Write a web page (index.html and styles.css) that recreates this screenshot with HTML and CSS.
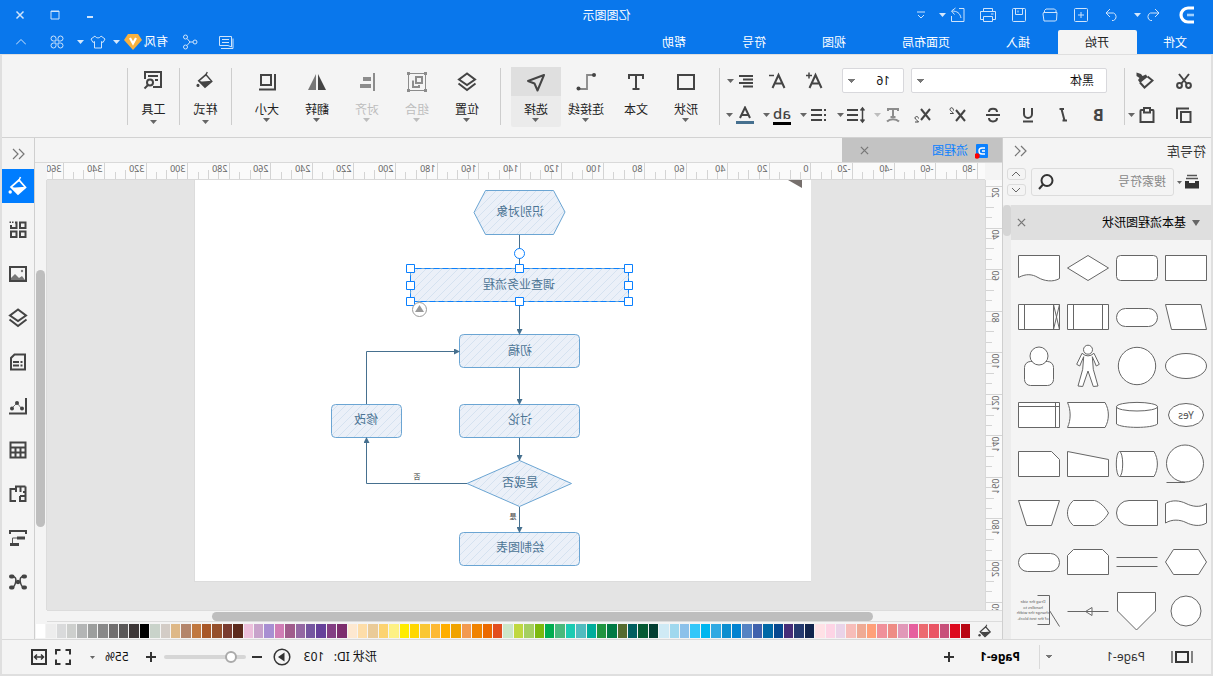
FILE: index.html
```html
<!DOCTYPE html>
<html lang="zh-CN">
<head>
<meta charset="utf-8">
<title>亿图图示</title>
<link rel="stylesheet" href="styles.css">
</head>
<body>
<svg class="defs" aria-hidden="true">
  <symbol id="caret" viewBox="0 0 7 4"><path d="M0 0H7L3.500 4Z" fill="currentColor"/></symbol>
  <symbol id="layers" viewBox="0 0 20 20"><path d="M10 1.500L18 7.500L10 13L2 7.500Z" fill="none" stroke="currentColor" stroke-width="2"/><path d="M1.500 11.500L10 18L18.500 11.500" fill="none" stroke="currentColor" stroke-width="2"/></symbol>
  <symbol id="bucket" viewBox="0 0 20 20"><path d="M7.500 1L9.500 5.500" stroke="currentColor" stroke-width="1.500" fill="none"/><path d="M9 4L17 11L10 18L2.500 11.500Z" fill="none" stroke="currentColor" stroke-width="1.700"/><path d="M3 11.500C7 10 13 13 17 10.500L10 18Z" fill="currentColor"/><circle cx="17.800" cy="16" r="1.700" fill="currentColor"/></symbol>
  <symbol id="more" viewBox="0 0 14 12"><path d="M6 1L1 6L6 11M12 1L7 6L12 11" fill="none" stroke="currentColor" stroke-width="1.200"/></symbol>
  <symbol id="cross" viewBox="0 0 10 10"><path d="M1 1L9 9M9 1L1 9" fill="none" stroke="currentColor" stroke-width="1.400"/></symbol>
</svg>
<div class="app">
  <header class="top">
    <div class="titlebar">
      <div class="quick">
        <svg class="logo" viewBox="0 0 16 18"><path d="M1 2H7A7 7 0 0 1 7 16H1" fill="none" stroke="#fff" stroke-width="3.200"/><path d="M1 9H8" stroke="#9fd0ff" stroke-width="2.600"/></svg>
        <button class="q q-split" aria-label="撤销"><svg class="i16" viewBox="0 0 16 16"><path d="M6 2L2 6L6 10M2 6H10.500A4 4 0 0 1 10.500 13.500H9"/></svg><svg class="caret"><use href="#caret"/></svg></button>
        <button class="q" aria-label="重做"><svg class="i16" viewBox="0 0 16 16"><path d="M10 2L14 6L10 10M14 6H6.500A4 4 0 0 0 6.500 13.500H8"/></svg></button>
        <button class="q" aria-label="新建"><svg class="i16" viewBox="0 0 16 16"><rect x="1.500" y="1.500" width="13" height="13" rx="1"/><path d="M8 5V11M5 8H11"/></svg></button>
        <button class="q" aria-label="打开"><svg class="i16" viewBox="0 0 16 16"><path d="M2 5.500V3.500L3.500 2H12L13.500 3.500V5.500M1 5.500H14.500L15 7L14 14H2.500L1.500 13Z"/></svg></button>
        <button class="q" aria-label="保存"><svg class="i16" viewBox="0 0 16 16"><rect x="1.500" y="1.500" width="13" height="13" rx="1"/><path d="M4.500 2V7.500H11.500V2M9 3.500V5.500"/></svg></button>
        <button class="q" aria-label="打印"><svg class="i16" viewBox="0 0 16 16"><path d="M3.500 4.500V1.500H12.500V4.500M3.500 12.500H0.500V4.500H15.500V12.500H12.500M3.500 9.500H12.500V14.500H3.500ZM2.500 7H5"/></svg></button>
        <button class="q q-split" aria-label="导出"><svg class="i16" viewBox="0 0 16 16"><path d="M7 1.500H2V14.500H14.500V9M5 11C6 6 9 4 14 4M10.500 1L14.500 4L11.500 7.500"/></svg><svg class="caret"><use href="#caret"/></svg></button>
        <button class="q q-more" aria-label="自定义"><svg class="i8" viewBox="0 0 8 8"><path d="M0 1H8M1 4L4 7L7 4"/></svg></button>
      </div>
      <h1 class="title">亿图图示</h1>
      <div class="window">
        <button class="w" aria-label="最小化"><svg class="i10" viewBox="0 0 10 10"><path d="M2 7H8" stroke-width="2"/></svg></button>
        <button class="w" aria-label="最大化"><svg class="i10" viewBox="0 0 10 10"><path d="M1 1H9V9H1ZM1 1.500H9"/></svg></button>
        <button class="w" aria-label="关闭"><svg class="i10" viewBox="0 0 10 10"><path d="M1.500 1.500L8.500 8.500M8.500 1.500L1.500 8.500" stroke-width="1.500"/></svg></button>
      </div>
    </div>
    <div class="menubar">
      <nav class="menu">
        <button class="m m-file">文件</button>
        <button class="m m-on">开始</button>
        <button class="m">插入</button>
        <button class="m">页面布局</button>
        <button class="m">视图</button>
        <button class="m">符号</button>
        <button class="m">帮助</button>
      </nav>
      <div class="account">
        <button class="a" aria-label="消息"><svg class="i16" viewBox="0 0 16 16"><path d="M2.500 2.500H14.500V11.500H6L2.500 13ZM5 5.500H12M5 8.500H12" /><path d="M1 4.500V14.500H13"/></svg></button>
        <button class="a" aria-label="分享"><svg class="i16" viewBox="0 0 16 16"><circle cx="3" cy="8" r="2"/><circle cx="12.500" cy="3" r="2"/><circle cx="12.500" cy="13" r="2"/><path d="M5 8H8L11 4.500M8 8L11 11.500"/></svg></button>
        <button class="user">有风<svg class="gem" viewBox="0 0 18 16"><path d="M4 0H14L18 6L9 16L0 6Z" fill="#f8b13e"/><path d="M6 4L9 9.500L12 4" fill="none" stroke="#fff" stroke-width="2.200"/></svg><svg class="caret"><use href="#caret"/></svg></button>
        <button class="skin" aria-label="皮肤"><svg class="i16" viewBox="0 0 16 16"><path d="M5 2L1 5L3 8.500L4.500 7.500V14H11.500V7.500L13 8.500L15 5L11 2C10 4.500 6 4.500 5 2Z"/></svg><svg class="caret"><use href="#caret"/></svg></button>
        <button class="a" aria-label="应用"><svg class="i16" viewBox="0 0 16 16"><path d="M7 7H4.500A2.500 2.500 0 1 1 7 4.500ZM9 7V4.500A2.500 2.500 0 1 1 11.500 7ZM7 9V11.500A2.500 2.500 0 1 1 4.500 9ZM9 9H11.500A2.500 2.500 0 1 1 9 11.500Z"/></svg></button>
        <button class="a" aria-label="收起"><svg class="i10" viewBox="0 0 10 10"><path d="M0 7.500L5 2.500L10 7.500"/></svg></button>
      </div>
    </div>
  </header>

  <div class="body">
    <section class="ribbon" aria-label="开始">
      <div class="tools clip">
        <div class="line">
          <button class="t" aria-label="剪切"><svg class="i18" viewBox="0 0 18 18"><path d="M4 2L12 12M14 2L6 12" class="st"/><circle cx="4.500" cy="13.500" r="2.400" class="st"/><circle cx="13.500" cy="13.500" r="2.400" class="st"/></svg></button>
          <button class="t" aria-label="格式刷"><svg class="i18" viewBox="0 0 18 18"><path d="M17.500 0.500L13 2L11.500 4L8 2.500L6.500 5L14 11L16 8L14.500 6L17.500 4Z" class="fl"/><path d="M6.500 4.500L1.500 8.500L9.500 15.500L14 10.500" class="st"/></svg></button>
        </div>
        <div class="line">
          <button class="t" aria-label="复制"><svg class="i18" viewBox="0 0 18 18"><path d="M2.500 6H12V16H2.500ZM4 2.500H16V13" class="st"/></svg></button>
          <button class="split narrow" aria-label="粘贴"><svg class="i18" viewBox="0 0 18 18"><path d="M6 4H3Q2.500 4 2.500 5V16H15.500V5Q15.500 4 15 4H12" class="st"/><path d="M6 2H12V6.500H6Z" class="st"/></svg><svg class="caret"><use href="#caret"/></svg></button>
        </div>
      </div>
      <i class="sep"></i>
      <div class="tools font">
        <div class="line fields">
          <select class="field family" aria-label="字体"><option>黑体</option></select>
          <select class="field size" aria-label="字号"><option>16</option></select>
          <div class="line tight">
            <button class="t wide" aria-label="增大字号"><svg class="i18" viewBox="0 0 18 18"><path d="M1.500 16L7.500 3L13.500 16M4 11.500H11" class="st"/><path d="M11 3.500H17M14 0.500V6.500" class="st thin"/></svg></button>
            <button class="t wide" aria-label="减小字号"><svg class="i18" viewBox="0 0 18 18"><path d="M1.500 16L7.500 3L13.500 16M4 11.500H11" class="st"/><path d="M12 3.500H17" class="st thin"/></svg></button>
            <button class="split" aria-label="对齐方式"><svg class="i18" viewBox="0 0 18 18"><path d="M2 4H16M2 7.500H12M2 11H16M2 14.500H12" class="st"/></svg><svg class="caret"><use href="#caret"/></svg></button>
          </div>
        </div>
        <div class="line tight">
          <button class="t glyph bold">B</button>
          <button class="t glyph" aria-label="斜体"><svg class="i18" viewBox="0 0 18 18"><path d="M8 3H12.500M10.500 3L7.500 14.500M5 14.500H9.500" class="st"/></svg></button>
          <button class="t glyph" aria-label="下划线"><svg class="i18" viewBox="0 0 18 18"><path d="M5 2V8A4 4 0 0 0 13 8V2M4 15.500H14" class="st"/></svg></button>
          <button class="t glyph" aria-label="删除线"><svg class="i18" viewBox="0 0 18 18"><path d="M13 6C13 1.500 5 1.500 5 6M5 12C5 16.500 13 16.500 13 12M2 9H16" class="st"/></svg></button>
          <button class="t glyph" aria-label="上标"><svg class="i18" viewBox="0 0 18 18"><path d="M2 4L11 15M11 4L2 15" class="st"/><path d="M13.500 4.500C13.500 1 17 1 17 3.500C17 5 14 6 13.500 7.500H17" class="st fine"/></svg></button>
          <button class="t glyph" aria-label="下标"><svg class="i18" viewBox="0 0 18 18"><path d="M2 3L11 14M11 3L2 14" class="st"/><path d="M13.500 12.500C13.500 10 17 10 17 12C17 13.500 14 14.500 13.500 16H17" class="st fine"/></svg></button>
          <button class="split off" aria-label="文字效果"><svg class="i18" viewBox="0 0 18 18"><path d="M4 5V3H14V5M9 3V11M6.500 11H11.500M3 15.500C6 12.500 12 12.500 15 15.500" class="st"/></svg><svg class="caret"><use href="#caret"/></svg></button>
          <button class="split" aria-label="行距"><svg class="i18" viewBox="0 0 18 18"><path d="M2.500 2V16M0.500 4.500L2.500 2L4.500 4.500M0.500 13.500L2.500 16L4.500 13.500" class="st thin"/><path d="M7 4H18M7 9H18M7 14H18" class="st"/></svg><svg class="caret"><use href="#caret"/></svg></button>
          <button class="split" aria-label="项目符号"><svg class="i18" viewBox="0 0 18 18"><path d="M2 4H4M2 9H4M2 14H4M6 4H17M6 9H17M6 14H17" class="st"/></svg><svg class="caret"><use href="#caret"/></svg></button>
          <button class="split"><span class="ab">ab</span><svg class="caret"><use href="#caret"/></svg></button>
          <button class="split" aria-label="字体颜色"><svg class="i18" viewBox="0 0 18 18"><path d="M4 12L9 1.500L14 12M5.500 9H12.500" class="st"/><path d="M0 16.500H18" stroke="#46708f" stroke-width="3"/></svg><svg class="caret"><use href="#caret"/></svg></button>
        </div>
      </div>
      <i class="sep"></i>
      <div class="bigs">
        <button class="big"><span class="pic"><svg class="i20" viewBox="0 0 20 20"><rect x="2" y="3" width="16" height="14" class="st"/></svg></span><span class="lb">形状</span><svg class="caret"><use href="#caret"/></svg></button>
        <button class="big"><span class="pic"><svg class="i20" viewBox="0 0 20 20"><path d="M3 7V3H17V7M10 3V17M6.500 17H13.500" class="st"/></svg></span><span class="lb">文本</span></button>
        <button class="big"><span class="pic"><svg class="i20" viewBox="0 0 20 20"><path d="M2 3H9V17H16" fill="none" stroke="#888" stroke-width="1.800"/><circle cx="2" cy="3" r="2" class="fl"/><circle cx="17.500" cy="16.500" r="2" class="fl"/></svg></span><span class="lb">连接线</span><svg class="caret"><use href="#caret"/></svg></button>
        <button class="big big-on"><span class="pic"><svg class="i20" viewBox="0 0 20 20"><path d="M2 3L18 9L11.500 11.500L8.500 18.500Z" class="st" stroke-linejoin="round"/></svg></span><span class="lb">选择</span><svg class="caret"><use href="#caret"/></svg></button>
      </div>
      <i class="sep"></i>
      <div class="bigs">
        <button class="big"><span class="pic"><svg class="i20"><use href="#layers"/></svg></span><span class="lb">位置</span><svg class="caret"><use href="#caret"/></svg></button>
        <button class="big off"><span class="pic"><svg class="i20" viewBox="0 0 20 20"><path d="M1.500 1.500H18.500V18.500H1.500Z" class="st fine"/><path d="M5 5H11V11H5ZM14 8.500V15H8V13" class="st"/><path d="M0 0H3V3H0ZM17 0H20V3H17ZM0 17H3V20H0ZM17 17H20V20H17Z" class="fl"/></svg></span><span class="lb">组合</span><svg class="caret"><use href="#caret"/></svg></button>
        <button class="big off"><span class="pic"><svg class="i20" viewBox="0 0 20 20"><path d="M3 1V19" class="st"/><path d="M6 5H14V9H6ZM6 12H17V16H6Z" class="fl"/></svg></span><span class="lb">对齐</span><svg class="caret"><use href="#caret"/></svg></button>
        <button class="big"><span class="pic"><svg class="i20" viewBox="0 0 20 20"><path d="M9 2V18H1Z" class="fl"/><path d="M11 2V18H19Z" fill="#777"/></svg></span><span class="lb">翻转</span><svg class="caret"><use href="#caret"/></svg></button>
        <button class="big"><span class="pic"><svg class="i20" viewBox="0 0 20 20"><path d="M6 3H16V13H6ZM2 2V17.500H18" class="st"/></svg></span><span class="lb">大小</span><svg class="caret"><use href="#caret"/></svg></button>
      </div>
      <i class="sep"></i>
      <button class="big big-tall"><span class="pic"><svg class="i18"><use href="#bucket"/></svg></span><span class="lb">样式</span><svg class="caret"><use href="#caret"/></svg></button>
      <i class="sep"></i>
      <button class="big big-tall"><span class="pic"><svg class="i20" viewBox="0 0 20 20"><path d="M10 17H2V2H18V9M5 6H15M5 10H8" class="st"/><circle cx="13" cy="12.500" r="3" class="st"/><path d="M15 15L18.500 18.500" class="st"/></svg></span><span class="lb">工具</span><svg class="caret"><use href="#caret"/></svg></button>
      <i class="sep"></i>
    </section>

    <main class="work">
      <aside class="library">
        <div class="lib-head"><h2 class="lib-title">符号库</h2><button class="plain" aria-label="收起符号库"><svg class="more"><use href="#more"/></svg></button></div>
        <div class="lib-search">
          <button class="box" aria-label="符号库菜单"><svg class="i16" viewBox="0 0 16 16"><path d="M3 1.500H13M2 4.500H14" stroke="#555" stroke-width="1.500"/><path d="M1 7H5V9H11V7H15V14.500H1Z" class="fl"/></svg><svg class="caret sm"><use href="#caret"/></svg></button>
          <div class="find"><input class="find-in" type="text" placeholder="搜索符号" aria-label="搜索符号"><svg class="lens" viewBox="0 0 18 18"><circle cx="10" cy="7.500" r="5.500" class="st"/><path d="M6 11.500L2 16" class="st" stroke-width="3"/></svg></div>
          <div class="steps">
            <button class="step" aria-label="上一个"><svg class="chev" viewBox="0 0 10 6"><path d="M1 5L5 1L9 5"/></svg></button>
            <button class="step" aria-label="下一个"><svg class="chev" viewBox="0 0 10 6"><path d="M1 1L5 5L9 1"/></svg></button>
          </div>
        </div>
        <div class="lib-body">
          <div class="lib-col">
            <div class="cat"><svg class="tri" viewBox="0 0 8 6"><path d="M0 0H8L4 6Z" fill="#666"/></svg><h3 class="cat-name">基本流程图形状</h3><button class="plain" aria-label="关闭"><svg class="x"><use href="#cross"/></svg></button></div>
            <div class="shapes">
              <svg class="s" viewBox="0 0 49 49"><path d="M4.500 11.500H45.500V36.500H4.500Z"/></svg>
              <svg class="s" viewBox="0 0 49 49"><rect x="4.500" y="11.500" width="41" height="25" rx="4"/></svg>
              <svg class="s" viewBox="0 0 49 49"><path d="M25 11.500L45.500 24L25 36.500L4.500 24Z"/></svg>
              <svg class="s" viewBox="0 0 49 49"><path d="M4.500 11.500H45.500V33.500C38 29.500 32 30 26 33.500S11 38.500 4.500 34.500Z"/></svg>
              <svg class="s" viewBox="0 0 49 49"><path d="M10 11.500H45.500L39.500 36.500H4.500Z"/></svg>
              <svg class="s" viewBox="0 0 49 49"><rect x="4.500" y="15.500" width="41" height="18" rx="9"/></svg>
              <svg class="s" viewBox="0 0 49 49"><path d="M4.500 11.500H45.500V36.500H4.500ZM10.500 11.500V36.500M39.500 11.500V36.500"/></svg>
              <svg class="s" viewBox="0 0 49 49"><path d="M4.500 11.500H45.500V36.500H4.500ZM10.500 11.500V36.500L4.500 11.500M10.500 11.500L4.500 36.500M39.500 11.500V36.500"/></svg>
              <svg class="s" viewBox="0 0 49 49"><ellipse cx="25" cy="24" rx="20.500" ry="12.500"/></svg>
              <svg class="s" viewBox="0 0 49 49"><circle cx="25" cy="24" r="18.700"/></svg>
              <svg class="s" viewBox="0 0 49 49"><circle cx="25" cy="7.700" r="4.500"/><path d="M19 11.300L13.700 22.300L16.700 24L20.700 14.700L19.700 27.300L15 44L19.700 44.500L25 29L30.300 44.500L35 44L30.300 27.300L29.300 14.700L33.300 24L36.300 22.300L31 11.300Q25 16.500 19 11.300Z"/></svg>
              <svg class="s" viewBox="0 0 49 49"><rect x="10.500" y="19.500" width="29" height="24" rx="6"/><circle cx="25" cy="14" r="9"/></svg>
              <svg class="s" viewBox="0 0 49 49"><ellipse cx="25" cy="24" rx="17.500" ry="11.500"/><text x="25" y="28" class="s-yes">Yes</text></svg>
              <svg class="s" viewBox="0 0 49 49"><path d="M4.500 15.500V33C10 37.500 40 37.500 45.500 33V15.500"/><ellipse cx="25" cy="15.700" rx="20.500" ry="4.300"/></svg>
              <svg class="s" viewBox="0 0 49 49"><path d="M45.500 11.500H8C3.500 19 3.500 29 8 36.500H45.500C42 29 42 19 45.500 11.500Z"/></svg>
              <svg class="s" viewBox="0 0 49 49"><path d="M4.500 11.500H45.500V36.500H4.500ZM8.500 11.500V36.500M4.500 15.500H45.500"/></svg>
              <svg class="s" viewBox="0 0 49 49"><circle cx="26" cy="23.500" r="18.500"/><path d="M26 42.500H44.500"/></svg>
              <svg class="s" viewBox="0 0 49 49"><path d="M42.500 11.500H8C3.500 19 3.500 29 8 36.500H42.500"/><ellipse cx="42.500" cy="24" rx="3.200" ry="12.500"/></svg>
              <svg class="s" viewBox="0 0 49 49"><path d="M45.500 11.500L4.500 19.500V36.500H45.500Z"/></svg>
              <svg class="s" viewBox="0 0 49 49"><path d="M12.500 11.500H45.500V36.500H4.500V19.500Z"/></svg>
              <svg class="s" viewBox="0 0 49 49"><path d="M4.500 14.500C11 19 19 17.500 25 14.500S39 10.500 45.500 14.500V34C39 30 31 30.500 25 33.500S11 38 4.500 34Z"/></svg>
              <svg class="s" viewBox="0 0 49 49"><path d="M4.500 11.500H33A12.500 12.500 0 0 1 33 36.500H4.500Z"/></svg>
              <svg class="s" viewBox="0 0 49 49"><path d="M39.500 11.500C47.500 18 47.500 30 39.500 36.500H18.500C13 35 8 30 4.500 24C8 18 13 13 18.500 11.500Z"/></svg>
              <svg class="s" viewBox="0 0 49 49"><path d="M4.500 11.500H45.500L37.500 36.500H12.500Z"/></svg>
              <svg class="s" viewBox="0 0 49 49"><path d="M4.500 24L12.500 11.500H37.500L45.500 24L37.500 36.500H12.500Z"/></svg>
              <svg class="s" viewBox="0 0 49 49"><path d="M4.500 19.500H45.500M4.500 28.500H45.500"/></svg>
              <svg class="s" viewBox="0 0 49 49"><path d="M4.500 36.500V17.500L10.500 11.500H39.500L45.500 17.500V36.500Z"/></svg>
              <svg class="s" viewBox="0 0 49 49"><rect x="4.500" y="15.500" width="41" height="18" rx="9"/></svg>
              <svg class="s" viewBox="0 0 49 49"><circle cx="25" cy="24" r="15"/></svg>
              <svg class="s" viewBox="0 0 49 49"><path d="M6.500 5.500H44.500V24L25.500 43L6.500 24Z"/></svg>
              <svg class="s" viewBox="0 0 49 49"><path d="M4.500 24.500H45.500M21 20.500L27.500 24.500L21 28.500Z"/></svg>
              <svg class="s" viewBox="0 0 49 49"><path d="M26.500 8.500H14.500V37.500H26.500M14.500 23.500L4.500 39.500" fill="none"/><g class="s-note"><text x="31" y="16">Drag the side</text><text x="31" y="22">handles to</text><text x="31" y="27">change the width</text><text x="31" y="33">of the text block.</text></g></svg>
            </div>
          </div>
          <div class="track"><div class="grip"></div></div>
        </div>
      </aside>

      <section class="editor">
        <div class="docs">
          <div class="doc"><svg class="doc-ic" viewBox="0 0 14 16"><rect x="1" y="1" width="12" height="14" rx="1" fill="#0a80ff"/><path d="M4 5H7A3 3 0 0 1 7 11H4M4 8H7" fill="none" stroke="#fff" stroke-width="1.400"/><circle cx="12" cy="13" r="2.700" fill="#f00"/></svg><span class="doc-name">流程图</span><button class="plain" aria-label="关闭文档"><svg class="x"><use href="#cross"/></svg></button></div>
        </div>
        <div class="desk">
          <div class="corner"></div>
          <svg class="rule-h" id="ruleH" aria-hidden="true"></svg>
          <div class="corner"></div>
          <svg class="rule-v" id="ruleV" aria-hidden="true"></svg>
          <div class="canvas">
            <svg class="page" viewBox="0 0 616 401">
              <defs>
                <pattern id="hatch" width="8" height="8" patternUnits="userSpaceOnUse"><path fill="#ebf0f8" d="M0 0H8V8H0Z"/><path d="M-1 -1L9 9M-1 7L1 9M7 -1L9 1" stroke="#cfdeed" stroke-width="0.800"/></pattern>
                <marker id="head" viewBox="0 0 6 6" refX="5" refY="3" markerWidth="6" markerHeight="6" markerUnits="userSpaceOnUse" orient="auto"><path d="M0 0L6 3L0 6Z" fill="#46708f"/></marker>
              </defs>
              <path d="M9 0H23L9 8Z" fill="#766f6c"/>
              <g class="node">
                <path d="M246 32L257.500 10.500H325.500L337 32.500L325.500 54.500H257.500Z"/>
                <path d="M182.500 88.500H400.500V121.500H182.500Z"/>
                <rect x="231.500" y="154.500" width="120" height="33" rx="4"/>
                <rect x="231.500" y="224.500" width="120" height="33" rx="4"/>
                <path d="M239.500 303.500L291.500 280.500L344 303.500L291.500 326.500Z"/>
                <rect x="231.500" y="352.500" width="120" height="33" rx="4"/>
                <rect x="409.500" y="224.500" width="70" height="33" rx="4"/>
              </g>
              <g class="wire">
                <path d="M291.500 55V88"/>
                <path d="M291.500 122V154" marker-end="url(#head)"/>
                <path d="M291.500 188V224" marker-end="url(#head)"/>
                <path d="M291.500 258V280" marker-end="url(#head)"/>
                <path d="M291.500 327V352" marker-end="url(#head)"/>
                <path d="M344 303.500H444.500V258" marker-end="url(#head)"/>
                <path d="M444.500 224V171.500H352" marker-end="url(#head)"/>
              </g>
              <g class="txt">
                <text x="291" y="36">识别对象</text>
                <text x="292" y="109">调查业务流程</text>
                <text x="291" y="175">初稿</text>
                <text x="291" y="244">讨论</text>
                <text x="291" y="307">是或否</text>
                <text x="291" y="372">绘制图表</text>
                <text x="445" y="244">修改</text>
              </g>
              <g class="tag"><text x="394" y="299">否</text><text x="298" y="339">是</text></g>
              <path class="pick" d="M182.500 88.500H400.500V121.500H182.500Z"/>
              <g class="knob">
                <circle cx="291.500" cy="73.500" r="5"/>
                <path d="M178.500 84.500h8v8h-8ZM287.500 84.500h8v8h-8ZM396.500 84.500h8v8h-8ZM178.500 101.500h8v8h-8ZM396.500 101.500h8v8h-8ZM178.500 117.500h8v8h-8ZM287.500 117.500h8v8h-8ZM396.500 117.500h8v8h-8Z"/>
              </g>
              <circle cx="391.500" cy="129.500" r="7" fill="#fff" stroke="#999"/><path d="M391.500 125L396 132H387Z" fill="#999"/>
            </svg>
          </div>
          <div class="vbar"><div class="vthumb"></div></div>
        </div>
        <div class="hbar"><div class="hthumb"></div></div>
        <div class="palette"><svg class="fillic"><use href="#bucket"/></svg><div class="colors" id="colors"></div></div>
      </section>

      <nav class="rail" aria-label="面板">
        <button class="r r-top" aria-label="收起面板"><svg class="more"><use href="#more"/></svg></button>
        <button class="r r-on" aria-label="样式"><svg class="i20"><use href="#bucket"/></svg></button>
        <button class="r" aria-label="符号"><svg class="i18" viewBox="0 0 18 18"><path d="M1.500 1.500H7V7H1.500ZM1.500 10.500H7V16H1.500ZM10.500 10.500H16V16H10.500ZM12 1.500H10.500V7H16V4" class="st"/><path d="M13.500 0.500H15V2H13.500ZM16 0.500H17.500V2H16Z" class="fl"/></svg></button>
        <button class="r" aria-label="图片"><svg class="i18" viewBox="0 0 18 18"><path d="M1 2H17V16H1Z" class="st"/><path d="M2 15L5 11L8 13L12 9L16 13V15Z" fill="#777"/><circle cx="5" cy="6" r="1.200" fill="#777"/></svg></button>
        <button class="r" aria-label="图层"><svg class="i20"><use href="#layers"/></svg></button>
        <button class="r" aria-label="备注"><svg class="i18" viewBox="0 0 18 18"><path d="M2 1.500H12.500L16 5V16.500H2Z" class="st"/><path d="M4.500 9H6.500M8 9H14M4.500 12.500H6.500M8 12.500H14" class="st"/></svg></button>
        <button class="r" aria-label="图表"><svg class="i18" viewBox="0 0 18 18"><path d="M1 1V16.500H18" class="st"/><path d="M5 12L10 6L15 11" stroke="#777" fill="none"/><circle cx="5" cy="11.500" r="2" class="fl"/><circle cx="10" cy="6" r="2" class="fl"/><circle cx="15" cy="11.500" r="2" class="fl"/></svg></button>
        <button class="r" aria-label="表格"><svg class="i18" viewBox="0 0 18 18"><path d="M1.500 1.500H16.500V16.500H1.500ZM1.500 6.500H16.500M1.500 11.500H16.500M6.500 6.500V16.500M11.500 6.500V16.500" class="st"/></svg></button>
        <button class="r" aria-label="平面图"><svg class="i18" viewBox="0 0 18 18"><path d="M1.500 1.500H11V4H16.500V16H11M8 16H1.500V1.500M1.500 7H4M6.500 2V7M11 4V7M1.500 11H7M7 11V16" class="st"/></svg></button>
        <button class="r" aria-label="甘特图"><svg class="i18" viewBox="0 0 18 18"><path d="M0 2H18M1 2V5M17 2V5" class="st"/><path d="M2 7.500H10V10.500H2ZM8 14H17V17H8Z" class="fl"/><path d="M10 9H14.500V14" stroke="#555" fill="none"/></svg></button>
        <button class="r" aria-label="思维导图"><svg class="i18" viewBox="0 0 18 18"><path d="M3 3.500C10 3 6 14 3 14.500M15 3.500C8 3 12 14 15 14.500M7 9H11" class="st thin"/><rect x="0" y="1.500" width="5.500" height="4" rx="2" class="fl"/><rect x="0" y="12.500" width="5.500" height="4" rx="2" class="fl"/><rect x="12.500" y="1.500" width="5.500" height="4" rx="2" class="fl"/><rect x="12.500" y="12.500" width="5.500" height="4" rx="2" class="fl"/><circle cx="9" cy="9" r="2.200" class="fl"/></svg></button>
      </nav>
    </main>

    <footer class="status">
      <button class="view" aria-label="演示视图"><svg class="viewic" viewBox="0 0 22 12"><path d="M1 0V12M21 0V12" stroke="#777" stroke-width="1.800"/><path d="M5 1H17V11H5Z" class="st"/></svg></button>
      <select class="pages" aria-label="页面"><option>Page-1</option></select>
      <button class="page-tab">Page-1</button>
      <button class="mini" aria-label="添加页面"><svg class="i10" viewBox="0 0 10 10"><path d="M5 0V10M0 5H10" class="st"/></svg></button>
      <div class="zoom">
        <span class="ident">形状 ID:&nbsp;&nbsp; 103</span>
        <button class="play" aria-label="播放"><svg class="i18" viewBox="0 0 18 18"><circle cx="9" cy="9" r="7.800" class="st thin"/><path d="M6.500 4.500L13 9L6.500 13.500Z" class="fl"/></svg></button>
        <button class="minus" aria-label="缩小"><svg class="i10" viewBox="0 0 10 10"><path d="M0 5H10" class="st"/></svg></button>
        <input class="slide" type="range" min="0" max="100" value="12" aria-label="缩放">
        <button class="plus" aria-label="放大"><svg class="i10" viewBox="0 0 10 10"><path d="M5 0V10M0 5H10" class="st"/></svg></button>
        <button class="pct">55%<svg class="caret sm"><use href="#caret"/></svg></button>
        <button class="fit" aria-label="全屏"><svg class="i16" viewBox="0 0 16 16"><path d="M1 5.500V1H5.500M10.500 1H15V5.500M15 10.500V15H10.500M5.500 15H1V10.500" class="st"/></svg></button>
        <button class="fit" aria-label="适应宽度"><svg class="i16" viewBox="0 0 16 16"><path d="M1 1H15V15H1Z" class="st"/><path d="M4 8H12M6 5.500L3.500 8L6 10.500M10 5.500L12.500 8L10 10.500" class="st thin"/></svg></button>
      </div>
    </footer>
  </div>
</div>
<script src="app.js"></script>
</body>
</html>
```
FILE: styles.css
```css
* { box-sizing: border-box; }
html, body { margin: 0; min-height: 100%; }
body {
  font: 12px/16px "Noto Sans", "Noto Sans CJK SC", sans-serif;
  color: #222;
  background: #f4f4f4;
}
button, input, select { font: inherit; color: inherit; margin: 0; padding: 0; border: 0; background: none; border-radius: 0; }
button { display: flex; align-items: center; justify-content: center; }
h1, h2, h3 { margin: 0; font-size: 12px; font-weight: 400; }
svg { display: block; flex: none; }
.defs { position: absolute; width: 0; height: 0; }

/* the whole window is shown mirrored */
.app { min-height: 100vh; display: flex; flex-direction: column; transform: scaleX(-1); }

.st { fill: none; stroke: currentColor; stroke-width: 2; }
.st.thin { stroke-width: 1.500; }
.st.fine { stroke-width: 1; }
.fl { fill: currentColor; }
.i8 { width: 8px; height: 8px; }
.i10 { width: 10px; height: 10px; }
.i16 { width: 16px; height: 16px; }
.i18 { width: 18px; height: 18px; }
.i20 { width: 20px; height: 20px; }
.caret { width: 7px; height: 4px; color: #666; }
.caret.sm { width: 5px; height: 3px; }
.x { width: 9px; height: 9px; color: #777; }
.more { width: 14px; height: 12px; color: #777; }

/* title and menu */
.top { background: #0977ec; color: #fff; }
.top .caret { color: #d5e8fc; }
.titlebar { display: grid; grid-template-columns: 1fr auto 1fr; height: 30px; align-items: center; }
.title { padding-top: 1px; }
.quick { display: flex; align-items: center; padding-left: 18px; }
.logo { width: 16px; height: 20px; margin-right: 11px; }
.q, .w, .a, .skin { height: 28px; fill: none; stroke: #cfe4fb; }
.q .caret, .skin .caret { stroke: none; }
.q { width: 31px; }
.q-split { width: 40px; justify-content: flex-start; padding-left: 7px; gap: 4px; }
.q-more { width: 24px; }
.window { display: flex; justify-content: flex-end; padding-right: 3px; }
.w { width: 35px; }
.menubar { display: flex; justify-content: space-between; height: 24px; }
.menu { display: flex; }
.m { padding: 2px 28px 0; }
.m-file { padding: 2px 26px 0; }
.m-on { background: #f4f4f4; color: #222; border-radius: 2px 2px 0 0; padding: 2px 27px 0 28px; }
.account { display: flex; align-items: center; padding-right: 3px; }
.a { width: 36px; height: 24px; }
.user { width: 62px; height: 24px; padding-left: 4px; justify-content: flex-start; }
.gem { width: 18px; height: 16px; margin: 0 4px 0 2px; }
.skin { width: 35px; height: 24px; justify-content: flex-start; padding-left: 4px; gap: 6px; }

.body { flex: 1; display: flex; flex-direction: column; border: solid #dfdfdf; border-width: 1px 2px 2px; background: #f4f4f4; }

/* ribbon */
.ribbon { display: flex; height: 83px; padding-top: 12px; border-bottom: 1px solid #d2d2d2; color: #444; }
.sep { width: 1px; height: 57px; margin-top: 1px; background: #cdcdcd; }
.tools { display: flex; flex-direction: column; gap: 9px; padding-top: 1px; }
.line { display: flex; height: 25px; gap: 9px; }
.line.tight { gap: 0; }
.clip { width: 86px; padding-left: 12px; }
.t { width: 30px; }
.t.wide { width: 37px; }
.t.glyph { width: 35px; }
.bold { font-size: 16px; font-weight: 700; }
.split { width: 37px; justify-content: flex-start; padding-left: 4px; gap: 3px; }
.split.narrow { width: 34px; }
.off { color: #8c8c8c; }
.off .caret, .off .lb { color: #bdbdbd; }
.ab { width: 18px; height: 20px; line-height: 16px; font-size: 15px; font-weight: 500; border-bottom: 3px solid #000; display: flex; justify-content: center; }
.font { padding-left: 8px; padding-right: 1px; }
.fields { padding-left: 9px; gap: 7px; }
.fields .tight { margin-left: 2px; }
.field { height: 25px; border: 1px solid #d8d8dc; border-radius: 2px; background: #fff; color: #111; }
.family { width: 196px; padding-left: 12px; }
.size { width: 62px; padding-left: 13px; }
.field, .pages {
  appearance: none;
  background-image: linear-gradient(to bottom left, #777 50%, transparent 50%), linear-gradient(to bottom right, #777 50%, transparent 50%);
  background-size: 4px 4px;
  background-repeat: no-repeat;
  background-position: right 9px center, right 5px center;
}
.bigs { display: flex; padding: 0 10px 0 8px; }
.big { width: 50px; height: 60px; flex-direction: column; justify-content: flex-start; border-radius: 2px; }
.pic { display: flex; align-items: center; justify-content: center; height: 29px; width: 100%; margin-bottom: 6px; }
.lb { color: #222; }
.big-on { background: #ebebeb; }
.big-on .pic { background: #dfdfdf; }
.big-tall { width: 51px; }
.big-tall .pic { height: 25px; margin-bottom: 10px; }
.big-tall .lb { margin-bottom: 2px; }

/* symbol library */
.work { flex: 1; display: grid; grid-template-columns: 209px 1fr 33px; }
.library { display: flex; flex-direction: column; border-right: 1px solid #cfcfcf; }
.lib-head { display: flex; justify-content: space-between; align-items: center; height: 26px; padding: 0 10px 0 5px; color: #333; }
.lib-title { font-size: 13px; }
.lib-search { display: flex; align-items: center; height: 41px; padding: 0 4px 5px 11px; color: #333; }
.box { gap: 2px; width: 26px; justify-content: flex-start; flex: none; }
.find { display: flex; align-items: center; flex: 1; min-width: 0; height: 28px; border: 1px solid #dcdcdc; border-radius: 3px; padding: 0 5px 0 7px; }
.find-in { flex: 1; min-width: 0; outline: 0; }
.find-in::placeholder { color: #888; opacity: 1; }
.lens { width: 18px; height: 18px; transform: scaleX(-1); }
.steps { display: flex; flex-direction: column; gap: 4px; margin-left: 5px; }
.step { width: 19px; height: 12px; border: 1px solid #dcdcdc; border-radius: 3px; }
.chev { width: 10px; height: 6px; fill: none; stroke: #666; }
.lib-body { display: flex; flex: 1; }
.lib-col { flex: 1; }
.cat { display: flex; align-items: center; height: 35px; background: #dfdfdf; padding: 0 6px 0 11px; color: #000; }
.tri { width: 8px; height: 6px; margin-right: 6px; }
.cat-name { flex: 1; font-weight: 400; }
.shapes { display: grid; grid-template-columns: repeat(4, 49px); padding-top: 4px; }
.s { width: 49px; height: 49px; fill: #fff; stroke: #666; stroke-width: 1; }
.s text { stroke: none; fill: #555; text-anchor: middle; }
.s-yes { font-size: 10px; }
.s-note { font-size: 4px; }
.track { width: 8px; background: #ececec; }
.grip { height: 31px; background: #d5d5d5; border-radius: 4px; }

/* editor */
.editor { display: flex; flex-direction: column; min-width: 0; }
.docs { display: flex; height: 25px; border-bottom: 1px solid #d9d9d9; }
.doc { display: flex; align-items: center; width: 160px; background: #c3c3c3; padding: 1px 18px 0 13px; color: #0a80ff; }
.doc-ic { width: 14px; height: 16px; margin-right: 7px; }
.doc-name { flex: 1; }
.desk { flex: 1; display: grid; grid-template-columns: 17px 1fr 12px; grid-template-rows: 17px 1fr; }
.corner { background: #f4f4f4; }
.rule-h { width: 100%; height: 17px; background: #fafafa; border-bottom: 1px solid #d9d9d9; }
.rule-v { width: 17px; height: 100%; background: #fafafa; border-right: 1px solid #d9d9d9; }
.tick { stroke: #d4d4d4; stroke-width: 1; }
.num { font-size: 9px; fill: #666; }
.canvas { position: relative; overflow: hidden; background: #e4e4e4; }
.page { position: absolute; left: 174px; top: 0; width: 617px; height: 402px; background: #fff; border: 1px solid #dcdcdc; border-top: 0; border-left: 0; }
.node { fill: url(#hatch); stroke: #6ba5d3; }
.wire { fill: none; stroke: #46708f; }
.txt { font-size: 12px; fill: #4c7494; text-anchor: middle; }
.tag { font-size: 7px; fill: #333; text-anchor: middle; }
.pick { fill: none; stroke: #0a80ff; stroke-dasharray: 6 3; }
.knob { fill: #fff; stroke: #0a80ff; }
.vbar { padding: 90px 1px 0; border-left: 1px solid #dcdcdc; }
.vthumb { height: 257px; border-radius: 5px; background: #bebebe; }
.hbar { height: 12px; padding: 1px 0 0 129px; border: solid #dcdcdc; border-width: 1px 0; margin-right: 12px; }
.hthumb { width: 80%; max-width: 662px; height: 9px; border-radius: 5px; background: #bebebe; }
.palette { display: flex; align-items: center; height: 17px; padding: 1px 1px 0 10px; }
.fillic { width: 14px; height: 14px; margin-right: 8px; color: #444; }
.colors { flex: 1; display: flex; gap: 1px; height: 14px; }
.c { flex: 1; }

/* side rail */
.rail { display: flex; flex-direction: column; border-left: 1px solid #cfcfcf; color: #444; }
.r { height: 44px; }
.r-top { height: 31px; }
.r-on { height: 34px; margin-bottom: 5px; background: #007dff; color: #fff; }

/* status bar */
.status { display: flex; align-items: center; height: 35px; border-top: 1px solid #d9d9d9; color: #333; }
.view { width: 58px; }
.viewic { width: 22px; height: 12px; }
.pages { width: 114px; height: 24px; padding-left: 8px; border-right: 1px solid #d9d9d9; }
.page-tab { width: 78px; font-weight: 700; color: #000; }
.mini { width: 24px; }
.zoom { display: flex; align-items: center; margin-left: auto; padding-right: 25px; }
.ident { color: #111; margin-right: 13px; }
.play { width: 18px; margin-right: 5px; }
.minus { width: 22px; }
.slide { appearance: none; width: 82px; height: 14px; }
.slide::-webkit-slider-runnable-track { height: 4px; border-radius: 2px; background: #d6d6d6; }
.slide::-webkit-slider-thumb { appearance: none; width: 12px; height: 12px; margin-top: -4px; border-radius: 50%; border: 2px solid #aaa; background: #fff; }
.plus { width: 26px; margin-right: 9px; }
.pct { gap: 10px; margin-right: 15px; color: #111; }
.fit { width: 24px; }
.play, .fit { height: 24px; }
```
FILE: app.js
```js
const NS = "http://www.w3.org/2000/svg";
const STEP = 41.55;

function add(svg, name, attrs, text) {
  const el = document.createElementNS(NS, name);
  for (const key in attrs) el.setAttribute(key, attrs[key]);
  if (text !== undefined) el.textContent = text;
  svg.appendChild(el);
}

/* horizontal ruler: zero sits on the left edge of the page */
const h = document.getElementById("ruleH");
for (let i = -16; i <= 74; i++) {
  const x = Math.round(173.5 + (i * STEP) / 4) + 0.5;
  const top = i % 4 === 0 ? 0 : i % 2 === 0 ? 7 : 9;
  add(h, "path", { class: "tick", d: `M${x} ${top}V17` });
  if (i % 4 === 0) add(h, "text", { class: "num", x: x + 2, y: 9 }, String(i * 5));
}

/* vertical ruler */
const v = document.getElementById("ruleV");
for (let i = 0; i <= 42; i++) {
  const y = Math.round(6 + (i * STEP) / 4) + 0.5;
  const left = i % 4 === 0 ? 0 : i % 2 === 0 ? 8 : 10;
  add(v, "path", { class: "tick", d: `M${left} ${y}H17` });
  if (i % 4 === 0) {
    add(v, "text", { class: "num", transform: `translate(10 ${y + 1}) rotate(-90)`, "text-anchor": "end" }, String(20 + i * 5));
  }
}

const colors = (
  "b90613 dd0a1e c8507a ea5565 ec6a70 e65f9e e198b8 ee8c85 f0909a ffa07a efaa94 f7bdb9 ead3e8 fdd4e5 ffe1e6 " +
  "12244d 24396f 452d78 07488f 0068a6 4062ad 5583c3 0082d0 0c8ecf 30a9e2 00b6ef 33c7f9 8cc1ea 9fd8ee cfeaf5 " +
  "033f33 055a33 005f60 556b2f 007a44 1f9440 00ad9b 50bcbf 1bcbb2 48b97c 00ad50 7cb90e a5cf60 c0d840 cce6c8 " +
  "e24e1f eb6900 f08300 f29a50 f0a300 ffae00 fdb934 fac733 ffd700 ffec00 fdf184 fcd370 eacb98 fddda8 fde8d0 " +
  "7d2e6e 833e83 66409a 7556a0 9468a3 a05c8c d07db5 a88fd2 c8a3cb ecc0dc 5c2a1c 793b2f 95502c a85828 c07840 " +
  "b4866c deb887 d3ccc6 c9d3ca 000000 3e3838 5a5858 706e6e 888888 9c9e9d b3b5b5 cdcfcd d9dadb ededed ffffff"
).split(" ");
const row = document.getElementById("colors");
for (const c of colors) {
  const chip = document.createElement("span");
  chip.className = "c";
  chip.style.background = "#" + c;
  row.appendChild(chip);
}
```
